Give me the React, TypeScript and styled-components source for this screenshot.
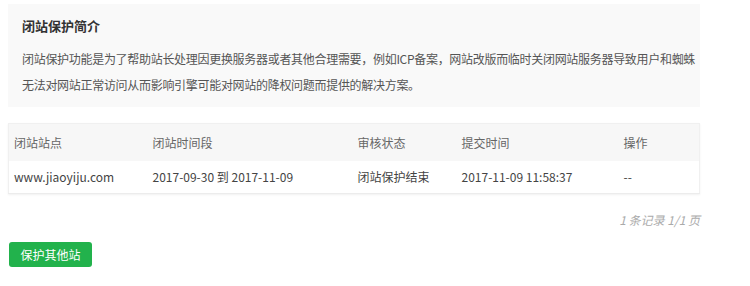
import React from "react";
import styled, { createGlobalStyle } from "styled-components";

const GlobalStyle = createGlobalStyle`
  body {
    margin: 0;
    background: #fff;
    font-family: "Microsoft YaHei", "Noto Sans CJK SC", "Noto Sans", sans-serif;
    color: #333;
  }
`;

const Page = styled.div`
  width: 692px;
  padding: 4px 0 0 8px;
`;

const Intro = styled.section`
  background: #f9f9f9;
  padding: 14px 10px 9px 14px;
`;

const IntroTitle = styled.h3`
  margin: 0 0 12px;
  font-size: 13px;
  font-weight: bold;
  line-height: 16px;
  color: #333;
`;

const IntroText = styled.p`
  margin: 0;
  font-size: 12px;
  line-height: 26px;
  letter-spacing: -0.3px;
  color: #555;
  white-space: nowrap;
`;

const Table = styled.table`
  width: 100%;
  margin-top: 16px;
  table-layout: fixed;
  border-collapse: collapse;
  border: 1px solid #f0f0f0;
  box-shadow: 0 1px 2px rgba(0, 0, 0, 0.06);
  font-size: 12px;
`;

const HeadCell = styled.th<{ w?: number }>`
  box-sizing: border-box;
  ${(p) => (p.w ? `width: ${p.w}px;` : "")}
  height: 37px;
  padding: 0 0 0 5px;
  background: #f7f7f7;
  text-align: left;
  font-weight: normal;
  color: #666;
`;

const Cell = styled.td`
  box-sizing: border-box;
  height: 33px;
  padding: 0 0 0 5px;
  color: #444;
  border-bottom: 1px solid #ececec;
  white-space: nowrap;
`;

const Pager = styled.div`
  margin-top: 18px;
  text-align: right;
  font-size: 12px;
  font-style: italic;
  color: #aaa;
  line-height: 16px;
`;

const GreenButton = styled.button`
  margin-top: 14px;
  margin-left: 1px;
  width: 83px;
  height: 25px;
  border: none;
  border-radius: 3px;
  background: #22b24c;
  color: #fff;
  font-family: inherit;
  font-size: 12px;
  font-weight: normal;
  cursor: pointer;
`;

const columns = [
  { label: "闭站站点", w: 139 },
  { label: "闭站时间段", w: 205 },
  { label: "审核状态", w: 104 },
  { label: "提交时间", w: 162 },
  { label: "操作" },
];

const rows = [
  ["www.jiaoyiju.com", "2017-09-30 到 2017-11-09", "闭站保护结束", "2017-11-09 11:58:37", "--"],
];

export default function App() {
  return (
    <>
      <GlobalStyle />
      <Page>
        <Intro>
          <IntroTitle>闭站保护简介</IntroTitle>
          <IntroText>
            闭站保护功能是为了帮助站长处理因更换服务器或者其他合理需要，例如ICP备案，网站改版而临时关闭网站服务器导致用户和蜘蛛
            <br />
            无法对网站正常访问从而影响引擎可能对网站的降权问题而提供的解决方案。
          </IntroText>
        </Intro>
        <Table>
          <thead>
            <tr>
              {columns.map((c) => (
                <HeadCell key={c.label} w={c.w}>
                  {c.label}
                </HeadCell>
              ))}
            </tr>
          </thead>
          <tbody>
            {rows.map((r, i) => (
              <tr key={i}>
                {r.map((v, j) => (
                  <Cell key={j}>{v}</Cell>
                ))}
              </tr>
            ))}
          </tbody>
        </Table>
        <Pager>1 条记录 1/1 页</Pager>
        <GreenButton>保护其他站</GreenButton>
      </Page>
    </>
  );
}
